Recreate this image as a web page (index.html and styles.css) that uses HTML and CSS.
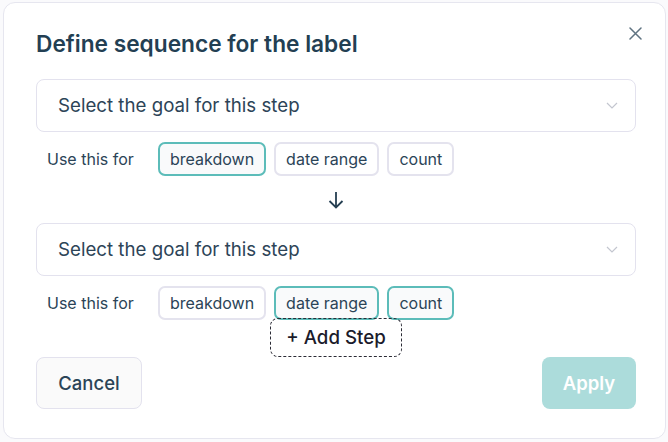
FILE: index.html
```html
<!DOCTYPE html>
<html lang="en">
<head>
    <meta charset="UTF-8">
    <meta name="viewport" content="width=device-width, initial-scale=1.0">
    <title>Define sequence</title>
    <link rel="stylesheet" href="styles.css">
</head>
<body>
    <div class="dialog">
        <button class="close-btn" aria-label="Close">
            <svg width="13" height="13" viewBox="0 0 13 13"><path d="M1 1L12 12M12 1L1 12" stroke="#5f7381" stroke-width="1.5" stroke-linecap="round"/></svg>
        </button>

        <h1>Define sequence for the label</h1>

        <div class="step">
            <div class="select">
                <span>Select the goal for this step</span>
                <svg width="12" height="7" viewBox="0 0 12 7"><path d="M1 1L6 6L11 1" fill="none" stroke="#c3c6cf" stroke-width="1.2"/></svg>
            </div>
            <div class="usage">
                <span class="usage-label">Use this for</span>
                <span class="chip active">breakdown</span>
                <span class="chip">date range</span>
                <span class="chip">count</span>
            </div>
        </div>

        <div class="arrow">
            <svg width="16" height="18" viewBox="0 0 16 18"><path d="M8 1V16.5M1.5 10L8 16.5L14.5 10" fill="none" stroke="#253f52" stroke-width="1.8"/></svg>
        </div>

        <div class="step">
            <div class="select">
                <span>Select the goal for this step</span>
                <svg width="12" height="7" viewBox="0 0 12 7"><path d="M1 1L6 6L11 1" fill="none" stroke="#c3c6cf" stroke-width="1.2"/></svg>
            </div>
            <div class="usage">
                <span class="usage-label">Use this for</span>
                <span class="chip">breakdown</span>
                <span class="chip active">date range</span>
                <span class="chip active">count</span>
            </div>
        </div>

        <button class="add-step">+ Add Step</button>

        <div class="footer">
            <button class="btn cancel">Cancel</button>
            <button class="btn apply">Apply</button>
        </div>
    </div>
</body>
</html>
```

FILE: styles.css
```css
body {
    margin: 0;
    background-color: #fafafc;
    font-family: Inter, "Noto Sans", sans-serif;
    color: #2b4457;
}
.dialog {
    position: relative;
    box-sizing: border-box;
    height: 437px;
    margin: 2px 2px 0 3px;
    padding: 26px 29px 0 32px;
    background-color: #fff;
    border: 1px solid #e6e6ef;
    border-radius: 12px;
}
.close-btn {
    position: absolute;
    top: 24px;
    right: 23px;
    padding: 0;
    border: none;
    background: none;
    display: flex;
}
h1 {
    margin: 0;
    font-size: 22.7px;
    line-height: 30px;
    font-weight: 600;
    color: #233f53;
}
.step:first-of-type {
    margin-top: 20px;
}
.select {
    box-sizing: border-box;
    height: 53px;
    display: flex;
    align-items: center;
    justify-content: space-between;
    padding: 0 17px 0 21px;
    border: 1px solid #e3e2ee;
    border-radius: 8px;
    font-size: 18.7px;
    color: #2d4457;
}
.usage {
    display: flex;
    align-items: center;
    gap: 8px;
    margin-top: 10px;
    padding-left: 11px;
    font-size: 16px;
}
.usage-label {
    width: 103px;
}
.chip {
    box-sizing: border-box;
    height: 34px;
    display: flex;
    align-items: center;
    padding: 0 10px;
    border: 2px solid #e4e3ee;
    border-radius: 7px;
    background-color: #fff;
}
.chip.active {
    border-color: #5cbcb9;
    background-color: #f9fafb;
}
.arrow {
    height: 47px;
    display: flex;
    align-items: center;
    justify-content: center;
}
.add-step {
    display: block;
    box-sizing: border-box;
    width: 132px;
    height: 39px;
    margin: -2px auto 0;
    position: relative;
    border: 1px dashed #2b2b35;
    border-radius: 8px;
    background: transparent;
    font-family: inherit;
    font-size: 18.7px;
    font-weight: 500;
    color: #1b1b2b;
}
.footer {
    display: flex;
    justify-content: space-between;
}
.btn {
    height: 52px;
    border-radius: 8px;
    font-family: inherit;
    font-size: 18.5px;
    font-weight: 500;
}
.cancel {
    width: 106px;
    border: 1px solid #e3e2ee;
    background-color: #fafafa;
    color: #2b4457;
}
.apply {
    width: 94px;
    border: none;
    background-color: #acdcdb;
    color: #fff;
    font-weight: 600;
}
```
